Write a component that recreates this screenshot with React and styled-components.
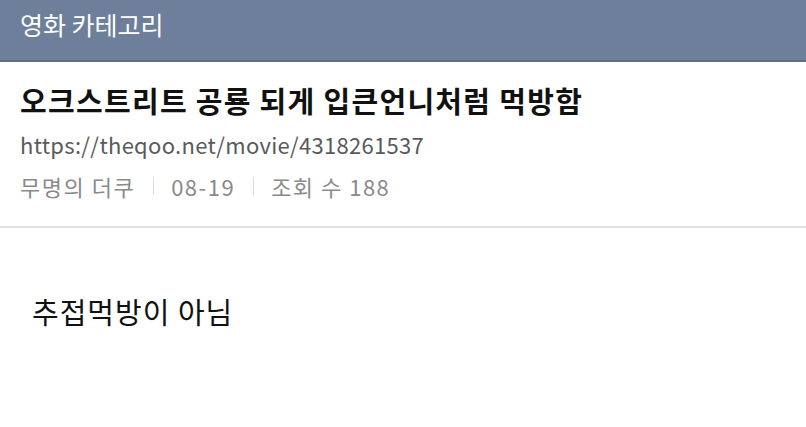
import React from "react";
import styled, { createGlobalStyle } from "styled-components";

const GlobalStyle = createGlobalStyle`
  html, body {
    margin: 0;
    padding: 0;
    background: #fff;
  }
  body {
    font-family: "Noto Sans CJK KR", "Noto Sans", sans-serif;
  }
`;

const Page = styled.div`
  width: 806px;
  height: 427px;
  overflow: hidden;
  background: #fff;
`;

const CategoryBar = styled.div`
  height: 62px;
  background: #6e7f9c;
  border-bottom: 2px solid #5f6f8a;
  display: flex;
  align-items: center;
  padding: 0 20px;
  box-sizing: border-box;
`;

const CategoryTitle = styled.span`
  color: #fff;
  font-size: 25px;
  margin-top: -12px;
`;

const Header = styled.div`
  padding: 16px 20px 0;
  height: 166px;
  box-sizing: border-box;
  border-bottom: 2px solid #e2e2e2;
`;

const PostTitle = styled.h1`
  margin: 0;
  font-size: 29px;
  font-weight: 700;
  color: #111;
  line-height: 44px;
  letter-spacing: 1.3px;
`;

const Url = styled.div`
  margin-top: 5px;
  font-size: 22px;
  color: #5a5a5a;
  line-height: 34px;
  letter-spacing: 0.3px;
`;

const Meta = styled.div`
  margin-top: 8px;
  display: flex;
  align-items: center;
  font-size: 22px;
  color: #8a8a8a;
  line-height: 34px;
  letter-spacing: 1.5px;
`;

const Sep = styled.span`
  width: 1px;
  height: 18px;
  background: #dcdcdc;
  margin: 0 17px 0 18px;
`;

const Body = styled.div`
  padding: 63px 32px 0;
  font-size: 29px;
  color: #111;
  line-height: 40px;
  letter-spacing: 1px;
`;

export default function App() {
  return (
    <Page>
      <GlobalStyle />
      <CategoryBar>
        <CategoryTitle>영화 카테고리</CategoryTitle>
      </CategoryBar>
      <Header>
        <PostTitle>오크스트리트 공룡 되게 입큰언니처럼 먹방함</PostTitle>
        <Url>https://theqoo.net/movie/4318261537</Url>
        <Meta>
          <span>무명의 더쿠</span>
          <Sep />
          <span>08-19</span>
          <Sep />
          <span>조회 수 188</span>
        </Meta>
      </Header>
      <Body>추접먹방이 아님</Body>
    </Page>
  );
}
